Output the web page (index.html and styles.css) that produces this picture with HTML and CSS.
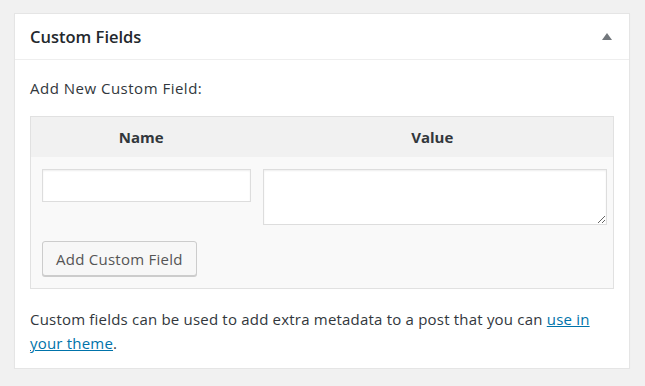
FILE: index.html
```html
<!DOCTYPE html>
<html lang="en">
<head>
    <meta charset="UTF-8">
    <title>Custom Fields</title>
    <link rel="stylesheet" href="styles.css">
</head>
<body>

<!-- Custom Fields meta box -->
<div class="postbox">
    <div class="postbox-header">
        <h2>Custom Fields</h2>
        <span class="toggle-arrow"></span>
    </div>

    <div class="inside">
        <p class="add-title">Add New Custom Field:</p>

        <table class="custom-table">
            <colgroup>
                <col class="col-name">
                <col class="col-value">
            </colgroup>
            <thead>
                <tr>
                    <th>Name</th>
                    <th>Value</th>
                </tr>
            </thead>
            <tbody>
                <tr>
                    <td class="cell-name"><input type="text" class="field-input"></td>
                    <td class="cell-value"><textarea class="field-textarea"></textarea></td>
                </tr>
                <tr>
                    <td colspan="2" class="cell-submit">
                        <button class="button">Add Custom Field</button>
                    </td>
                </tr>
            </tbody>
        </table>

        <p class="help-text">Custom fields can be used to add extra metadata to a post that you can <a href="#">use in your theme</a>.</p>
    </div>
</div>

</body>
</html>
```

FILE: styles.css
```css
body {
    margin: 0;
    padding: 13px 15px 0 14px;
    background-color: #f1f1f1;
    font-family: "Open Sans", "Noto Sans", sans-serif;
    font-size: 15px;
    color: #32373c;
}

.postbox {
    width: 614px;
    background-color: #fff;
    border: 1px solid #e5e5e5;
    box-shadow: 0 1px 1px rgba(0, 0, 0, 0.04);
}

.postbox-header {
    display: flex;
    align-items: center;
    justify-content: space-between;
    height: 45px;
    padding: 0 17px 0 15px;
    border-bottom: 1px solid #eee;
}

.postbox-header h2 {
    margin: 0;
    font-size: 16.5px;
    font-weight: 600;
    color: #23282d;
}

/* small collapse arrow */
.toggle-arrow {
    width: 0;
    height: 0;
    border-left: 5px solid transparent;
    border-right: 5px solid transparent;
    border-bottom: 7px solid #72777c;
}

.inside {
    padding: 16px 15px 13px 15px;
}

.add-title {
    margin: 0 0 16px 0;
    line-height: 24px;
    font-size: 15px;
    letter-spacing: 0.5px;
}

.custom-table {
    width: 584px;
    border: 1px solid #e1e1e1;
    border-collapse: collapse;
    table-layout: fixed;
    background-color: #f9f9f9;
}

.col-name {
    width: 221px;
}

.custom-table th {
    background-color: #f1f1f1;
    padding: 8px 0;
    line-height: 24px;
    font-size: 15px;
    font-weight: 700;
    color: #32373c;
    text-align: center;
}

.cell-name {
    padding: 12px 1px 0 11px;
    vertical-align: top;
}

.cell-value {
    padding: 12px 6px 0 11px;
    vertical-align: top;
}

.cell-submit {
    padding: 16px 11px 12px 11px;
}

.field-input,
.field-textarea {
    display: block;
    box-sizing: border-box;
    width: 100%;
    margin: 0;
    border: 1px solid #ddd;
    background-color: #fff;
    box-shadow: inset 0 1px 2px rgba(0, 0, 0, 0.07);
    font-family: inherit;
    font-size: 15px;
}

.field-input {
    height: 33px;
}

.field-textarea {
    height: 56px;
}

.button {
    height: 35px;
    padding: 0 13px;
    border: 1px solid #ccc;
    border-radius: 3px;
    background-color: #f7f7f7;
    box-shadow: 0 1px 0 #ccc;
    font-family: inherit;
    font-size: 15px;
    letter-spacing: 0.25px;
    color: #555;
    cursor: pointer;
}

.help-text {
    margin: 18px 0 0 0;
    line-height: 24px;
    font-size: 15px;
    letter-spacing: 0.2px;
}

.help-text a {
    color: #0073aa;
}
```
